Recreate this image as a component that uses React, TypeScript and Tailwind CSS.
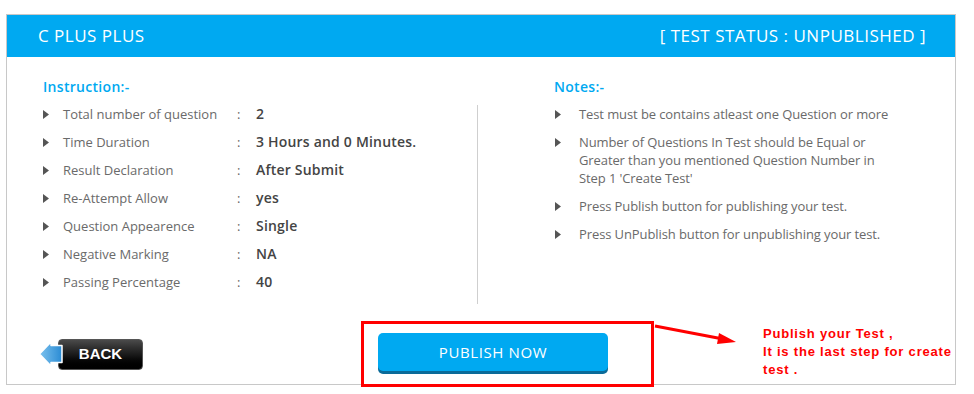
import React from "react";

interface Row {
  label: string;
  value: string;
}

const rows: Row[] = [
  { label: "Total number of question", value: "2" },
  { label: "Time Duration", value: "3 Hours and 0 Minutes." },
  { label: "Result Declaration", value: "After Submit" },
  { label: "Re-Attempt Allow", value: "yes" },
  { label: "Question Appearence", value: "Single" },
  { label: "Negative Marking", value: "NA" },
  { label: "Passing Percentage", value: "40" },
];

const notes: string[] = [
  "Test must be contains atleast one Question or more",
  "Number of Questions In Test should be Equal or Greater than you mentioned Question Number in Step 1 'Create Test'",
  "Press Publish button for publishing your test.",
  "Press UnPublish button for unpublishing your test.",
];

const Bullet: React.FC = () => (
  <svg width="6" height="9" viewBox="0 0 6 9" className="shrink-0 mt-[5px]">
    <path d="M0 0 L6 4.5 L0 9 Z" fill="#555" />
  </svg>
);

const BackButton: React.FC = () => (
  <div className="flex items-center">
    <svg width="26" height="28" viewBox="0 0 26 28" className="relative z-10 -mr-[6px]">
      <defs>
        <linearGradient id="arrowGrad" x1="0" y1="0" x2="1" y2="0">
          <stop offset="0" stopColor="#7cc2ee" />
          <stop offset="1" stopColor="#2a8bd4" />
        </linearGradient>
      </defs>
      <path
        d="M1.5 14 L13 2 L13 5.5 L24 5.5 L24 22.5 L13 22.5 L13 26 Z"
        fill="url(#arrowGrad)"
        stroke="#fff"
        strokeWidth="1.5"
        strokeLinejoin="round"
      />
    </svg>
    <button className="w-[85px] h-[31px] rounded-[4px] bg-gradient-to-b from-[#4a4a4a] via-[#1a1a1a] to-[#000] border border-[#555] text-white font-bold text-[15px] font-['Liberation_Sans',Arial,sans-serif]">
      BACK
    </button>
  </div>
);

const App: React.FC = () => {
  return (
    <div className="relative w-[974px] h-[394px] bg-white font-['Open_Sans',sans-serif]">
      <div className="pt-[14px] pl-[6px]">
        <div className="w-[950px] border border-[#c8c8c8]">
          <div className="h-[42px] bg-[#00a9f1] flex items-center justify-between pl-[31px] pr-[29px] text-white text-[17px] tracking-[0.5px]">
            <span>C PLUS PLUS</span>
            <span>[ TEST STATUS : UNPUBLISHED ]</span>
          </div>

          <div className="flex">
            <div className="w-[471px] pt-[21px] flex flex-col">
              <div className="pl-[36px] text-[14px] leading-[18px] font-semibold text-[#00a9f1] tracking-[0.3px]">
                Instruction:-
              </div>
              <div className="flex mt-[9px]">
                <div className="flex-1 pl-[36px] flex flex-col gap-[10px]">
                  {rows.map((row) => (
                    <div key={row.label} className="flex items-start text-[13px] leading-[18px]">
                      <Bullet />
                      <span className="ml-[14px] w-[174px] text-[#6a6a6a]">{row.label}</span>
                      <span className="w-[19px] text-[#666]">:</span>
                      <span className="font-semibold text-[14px] text-[#444] tracking-[0.2px]">{row.value}</span>
                    </div>
                  ))}
                </div>
                <div className="w-px h-[199px] bg-[#cfcfcf]" />
              </div>
            </div>

            <div className="flex-1 pt-[21px] pl-[76px]">
              <div className="text-[14px] leading-[18px] font-semibold text-[#00a9f1] tracking-[0.3px]">
                Notes:-
              </div>
              <div className="mt-[9px] flex flex-col gap-[10px]">
                {notes.map((note) => (
                  <div key={note} className="flex text-[13px] leading-[18px] text-[#6a6a6a]">
                    <span className="ml-[1px]">
                      <Bullet />
                    </span>
                    <span className="ml-[18px] w-[318px] tracking-[-0.1px]">{note}</span>
                  </div>
                ))}
              </div>
            </div>
          </div>

          <div className="flex items-center pt-[31px] pb-[11px] pl-[31px]">
            <BackButton />
            <button className="ml-[235px] w-[230px] h-[38px] rounded-[5px] bg-[#00a9f1] shadow-[0_3px_0_#0b6b99] text-white text-[15px] tracking-[0.6px] -translate-y-[2px]">
              PUBLISH NOW
            </button>
          </div>
        </div>
      </div>

      {/* screenshot annotations */}
      <div className="absolute left-[361px] top-[321px] w-[293px] h-[66px] border-[3px] border-[#ff0000]" />
      <svg
        className="absolute left-[653px] top-[322px]"
        width="90"
        height="26"
        viewBox="0 0 90 26"
      >
        <line x1="2" y1="4" x2="70" y2="17" stroke="#ff0000" strokeWidth="3" />
        <path d="M83 20 L66 11 L64 22 Z" fill="#ff0000" />
      </svg>
      <div className="absolute left-[763px] top-[325px] text-[13px] leading-[18px] font-bold text-[#ff0000] font-['Liberation_Sans',Arial,sans-serif] tracking-[0.8px]">
        <div>Publish your Test ,</div>
        <div>It is the last step for create</div>
        <div>test .</div>
      </div>
    </div>
  );
};

export default App;
